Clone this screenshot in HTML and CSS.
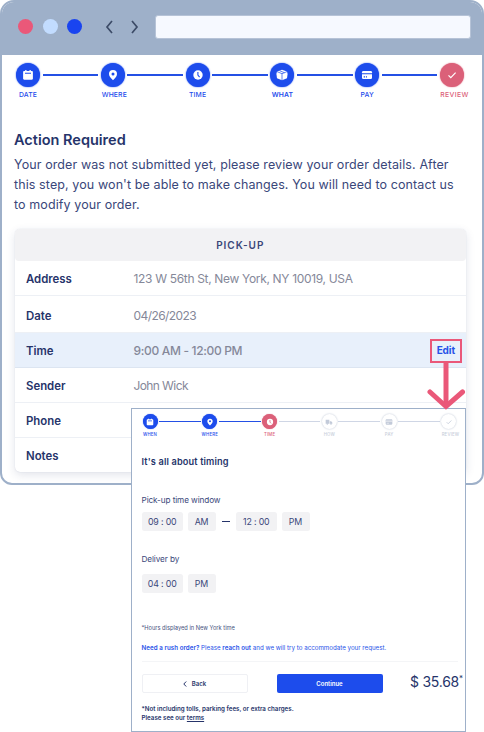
FILE: index.html
```html
<!DOCTYPE html>
<html lang="en">
<head>
<meta charset="utf-8">
<title>Review order</title>
<link rel="stylesheet" href="styles.css">
</head>
<body>
<svg class="symbols" aria-hidden="true">
  <symbol id="calendar" viewBox="0 0 12 12"><path fill="currentColor" d="M2.300 2h.9V1h1.300v1h3V1h1.300v1h.9c.8 0 1.200.5 1.200 1.200v6.400c0 .8-.5 1.200-1.200 1.200H2.300c-.8 0-1.200-.5-1.200-1.200V3.200C1.100 2.500 1.500 2 2.300 2z"/><path class="cut" d="M3 4.300h6"/></symbol>
  <symbol id="pin" viewBox="0 0 12 12"><path fill="currentColor" fill-rule="evenodd" d="M6 1a4 4 0 0 0-4 4c0 2.600 2 4.200 4 6.200C8 9.200 10 7.600 10 5a4 4 0 0 0-4-4zm0 2.500a1.500 1.500 0 1 1 0 3 1.500 1.500 0 0 1 0-3z"/></symbol>
  <symbol id="clock" viewBox="0 0 12 12"><circle cx="6" cy="6" r="4.700" fill="currentColor"/><path class="cut" d="M5.900 3v3.100l1.700 2"/></symbol>
  <symbol id="box" viewBox="0 0 12 12"><path fill="currentColor" d="M6 .7 11 2.600 11.600 5 11 9.300 6 11.300 1 9.300.4 5 1 2.600z"/><path class="cut thin" d="M1 2.600 6 4.700l5-2.100M6 4.700v7M3.400 1.600l5 2.100"/></symbol>
  <symbol id="card" viewBox="0 0 12 12"><rect x="1" y="2" width="10" height="8" rx="1.200" fill="currentColor"/><path class="cut" d="M1 4.700h10M2.700 7.900h1.400M5 7.900h1"/></symbol>
  <symbol id="check" viewBox="0 0 12 12"><path d="M2.500 6.300 4.800 8.600 9.600 3.700" fill="none" stroke="currentColor" stroke-width="1.200"/></symbol>
  <symbol id="truck" viewBox="0 0 12 12"><path fill="currentColor" d="M1 2.500h5.500v6.300H1zM7.200 4.700h2.100l1.700 2v2.100H7.200z"/><circle cx="3.500" cy="9" r="1.200" fill="currentColor"/><circle cx="9" cy="9" r="1.200" fill="currentColor"/></symbol>
</svg>

<section class="browser">
  <header class="bar">
    <i class="dot red"></i><i class="dot pale"></i><i class="dot blue"></i>
    <svg class="nav" viewBox="0 0 34 14"><path d="M7 1 2 7l5 6M27 1 32 7l-5 6"/></svg>
    <div class="url"></div>
  </header>
  <main class="page">
    <ol class="steps">
      <li class="step"><span class="disc"><svg><use href="#calendar"/></svg></span><b>DATE</b></li>
      <li class="line"></li>
      <li class="step where"><span class="disc"><svg><use href="#pin"/></svg></span><b>WHERE</b></li>
      <li class="line"></li>
      <li class="step"><span class="disc"><svg><use href="#clock"/></svg></span><b>TIME</b></li>
      <li class="line"></li>
      <li class="step what"><span class="disc"><svg><use href="#box"/></svg></span><b>WHAT</b></li>
      <li class="line"></li>
      <li class="step"><span class="disc"><svg><use href="#card"/></svg></span><b>PAY</b></li>
      <li class="line"></li>
      <li class="step current review"><span class="disc"><svg><use href="#check"/></svg></span><b>REVIEW</b></li>
    </ol>
    <h1>Action Required</h1>
    <p class="intro">Your order was not submitted yet, please review your order details. After<br>this step, you won't be able to make changes. You will need to contact us<br>to modify your order.</p>
    <section class="order">
      <h2>PICK-UP</h2>
      <dl>
        <div class="row"><dt>Address</dt><dd>123 W 56th St, New York, NY 10019, USA</dd></div>
        <div class="row date"><dt>Date</dt><dd>04/26/2023</dd></div>
        <div class="row active"><dt>Time</dt><dd>9:00 AM - 12:00 PM</dd><dd class="edit">Edit</dd></div>
        <div class="row sender"><dt>Sender</dt><dd>John Wick</dd></div>
        <div class="row"><dt>Phone</dt><dd></dd></div>
        <div class="row"><dt>Notes</dt><dd></dd></div>
      </dl>
    </section>
  </main>
</section>

<section class="popup">
  <ol class="steps small">
    <li class="step"><span class="disc"><svg><use href="#calendar"/></svg></span><b>WHEN</b></li>
    <li class="line"></li>
    <li class="step"><span class="disc"><svg><use href="#pin"/></svg></span><b>WHERE</b></li>
    <li class="line"></li>
    <li class="step current"><span class="disc"><svg><use href="#clock"/></svg></span><b>TIME</b></li>
    <li class="line off"></li>
    <li class="step todo"><span class="disc"><svg><use href="#truck"/></svg></span><b>HOW</b></li>
    <li class="line off"></li>
    <li class="step todo"><span class="disc"><svg><use href="#card"/></svg></span><b>PAY</b></li>
    <li class="line off"></li>
    <li class="step todo review"><span class="disc"><svg><use href="#check"/></svg></span><b>REVIEW</b></li>
  </ol>
  <h3>It's all about timing</h3>
  <p class="label">Pick-up time window</p>
  <div class="times"><span class="time">09 : 00</span><span class="half">AM</span><i class="dash"></i><span class="time">12 : 00</span><span class="half">PM</span></div>
  <p class="label">Deliver by</p>
  <div class="times second"><span class="time">04 : 00</span><span class="half">PM</span></div>
  <p class="hours">*Hours displayed in New York time</p>
  <p class="rush"><b>Need a rush order?</b> Please <b>reach out</b> and we will try to accommodate your request.</p>
  <footer>
    <span class="button back"><svg viewBox="0 0 4 6"><path d="M3.200.5.800 3l2.400 2.500"/></svg>Back</span>
    <span class="button continue">Continue</span>
    <span class="price">$ 35.68<sup>*</sup></span>
  </footer>
  <p class="fine">*Not including tolls, parking fees, or extra charges.<br>Please see our <u>terms</u></p>
</section>

<svg class="arrow" viewBox="0 0 40 73"><rect x="4" y="1" width="30" height="22"/><path class="shaft" d="M19 24v41"/><path class="head" d="M3 53l16 14.500L35.500 53"/></svg>
</body>
</html>
```

FILE: styles.css
```css
* { box-sizing: border-box; margin: 0; padding: 0; }
body { width: 484px; height: 732px; overflow: hidden; background: #fff; color: #26346a; font-family: Inter, "Liberation Sans", sans-serif; position: relative; white-space: nowrap; }
ol { list-style: none; }
.symbols { position: absolute; width: 0; height: 0; }
.cut { fill: none; stroke: var(--disc); stroke-width: 1.1; }
.thin { stroke-width: .7; }

.browser { height: 485px; border: 2px solid #9eb0c9; border-radius: 14px 14px 12px 12px; overflow: hidden; }
.bar { height: 53px; padding: 0 11.500px 4px 16px; display: flex; align-items: center; background: #9eb0c9; }
.dot { width: 15px; height: 15px; margin-right: 9.500px; border-radius: 50%; }
.red { background: #ea5879; }
.pale { background: #c2dcff; }
.blue { background: #1944f0; }
.nav { width: 34px; height: 14px; margin: 0 16.500px 0 13px; fill: none; stroke: #3c4b67; stroke-width: 1.7; }
.url { flex: 1; height: 24px; border: 1px solid #b6c3d7; border-radius: 3px; background: #f6f9ff; }
.page { padding: 8px 16px 0 12px; }

.steps { display: flex; margin: 0 0 0 2px; width: 448px; }
.step { --disc: #1d4cec; width: 24px; display: flex; flex-direction: column; align-items: center; color: var(--disc); }
.disc { width: 24px; height: 24px; border-radius: 50%; background: var(--disc); color: #fff; display: grid; place-items: center; box-shadow: 0 0 1.500px var(--disc); }
.disc svg { width: 12px; height: 12px; }
.step b { margin-top: 3px; font-size: 6.800px; line-height: 9px; font-weight: 500; letter-spacing: .15px; }
.where b { position: relative; left: 1.500px; }
.review b { position: relative; left: 2.500px; letter-spacing: .4px; }
.what b { font-weight: 600; }
.line { flex: 1; height: 1.500px; margin: 11px 2.500px 0; background: #2450e5; }
.current { --disc: #db6079; }

h1 { margin: 32px 0 0; font-size: 14.500px; line-height: 18px; font-weight: 600; }
.intro { margin-top: 6px; font-size: 12.500px; line-height: 20px; letter-spacing: .1px; color: #3a477a; }
.order { margin: 14px 0 0 .5px; width: 451.500px; height: 243px; border-radius: 5px; box-shadow: 0 3px 10px #26346a22, 0 0 1px #26346a33; overflow: hidden; background: #fff; }
h2 { height: 32px; line-height: 33px; text-align: center; font-size: 10px; font-weight: 600; letter-spacing: 1px; background: #f2f2f4; border-radius: 4px; color: #3a4779; }
.row { height: 35px; display: flex; align-items: center; padding: 1px 11px 0 11.500px; border-bottom: 1px solid #edf0f5; }
.row.date { height: 37px; padding-top: 3px; }
.row.active { background: #e8f0fb; border-color: #dce5f1; }
.row:last-child { border: 0; height: 34px; }
dt { width: 107.500px; font-size: 11.400px; font-weight: 600; }
dd { flex: 1; font-size: 12px; letter-spacing: -.33px; color: #858899; position: relative; top: -.5px; }
.date dd { letter-spacing: -.58px; }
.sender dd { letter-spacing: -.6px; }
.active dd { font-weight: 500; }
.active .edit { flex: none; font-size: 10px; letter-spacing: -.1px; font-weight: 700; color: #2852e8; }

.popup { position: absolute; left: 131px; top: 408px; width: 335px; height: 324px; padding: 5px 3px 0 9.500px; border: 1px solid #9eb0c9; background: #fff; }
.small { width: 314px; margin-left: 1px; }
.small .step, .small .disc { width: 15px; }
.small .disc { height: 15px; box-shadow: 0 0 1px var(--disc); }
.small .disc svg { width: 8px; height: 8px; }
.small .step b { margin-top: 2.500px; font-size: 4.300px; line-height: 5px; font-weight: 500; letter-spacing: .2px; }
.small .review b { left: 1.500px; }
.small .line { height: 1px; margin: 7px 1.500px 0; }
.small .off { background: #cfd6e5; }
.small .todo { --disc: #fff; color: #c8ceda; }
.small .todo .disc { color: #c2cad9; box-shadow: 0 0 2px #b8c0d0; }
h3 { margin-top: 19px; font-size: 9.200px; line-height: 12px; font-weight: 600; letter-spacing: .15px; }
.label { margin-top: 26px; font-size: 8.200px; line-height: 12px; letter-spacing: -.1px; color: #3a477a; }
.times { display: flex; align-items: center; margin-top: 6px; gap: 4.500px; font-size: 8.800px; letter-spacing: -.15px; color: #3a477a; }
.times span { height: 19px; line-height: 19px; border-radius: 2.500px; background: #f2f2f4; text-align: center; }
.time { width: 41.500px; }
.half { width: 28px; }
.dash { width: 8px; height: 1px; margin: 0 1.500px; background: #26346a; }
.times + .label { margin-top: 22px; }
.times.second { margin-top: 9px; }
.hours { margin-top: 31px; font-size: 5.700px; line-height: 8px; color: #45517e; }
.rush { margin-top: 12px; padding-bottom: 9px; border-bottom: 1px solid #f4f5f7; margin-right: 4px; font-size: 6.200px; line-height: 8px; color: #2852e8; }
.rush b { font-weight: 600; letter-spacing: .05px; }
footer { display: flex; height: 19px; margin-top: 12.500px; align-items: center; }
.button { flex: none; width: 106px; height: 19px; border-radius: 2px; display: flex; align-items: center; justify-content: center; font-size: 6px; font-weight: 600; }
.back { border: 1px solid #eff0f4; margin-right: 29px; }
.back svg { width: 4px; height: 6px; margin-right: 5px; fill: none; stroke: #26346a; }
.continue { color: #fff; background: #1d4cec; }
.price { margin-left: 27.500px; font-size: 14px; line-height: 19px; letter-spacing: -.25px; position: relative; top: -2px; }
.price sup { font-size: 8px; line-height: 0; }
.fine { margin-top: 11px; font-size: 6.200px; line-height: 9px; font-weight: 600; }
.arrow { position: absolute; left: 427px; top: 339px; width: 40px; height: 73px; fill: none; stroke: #ea5879; stroke-width: 2; }
.shaft { stroke-width: 5; }
.head { stroke-width: 5; stroke-linecap: round; }
```
